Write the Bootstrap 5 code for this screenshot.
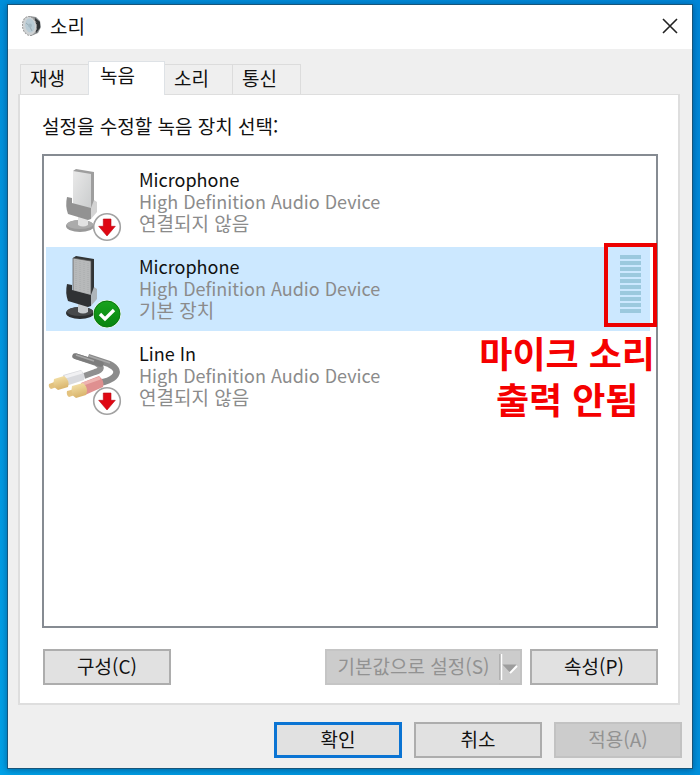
<!DOCTYPE html>
<html lang="ko">
<head>
<meta charset="utf-8">
<meta name="viewport" content="width=device-width, initial-scale=1">
<title>소리</title>
<link href="https://cdn.jsdelivr.net/npm/bootstrap@5.3.0/dist/css/bootstrap.min.css" rel="stylesheet">
<style>
body{font-family:"Noto Sans CJK KR",sans-serif;font-size:19px;line-height:22px;color:#111;background:linear-gradient(to top right,#00a2e8,#0091dc 45%,#0087d8)}
.desk{padding:4px 7px 6px}
.win{background:#efefef;border:1px solid #17557a;box-shadow:0 1px 7px #003d70a0}
.win-title{height:44px;padding:0 14px 3px 14px;background:#fff}
.win-title h1{font-size:19px;line-height:22px;font-weight:400}
.close-btn{line-height:0}
.win-body{padding:12px 12px 0 10px}
.sheet-tabs{--bs-nav-tabs-border-width:0;padding-left:2px}
.sheet-tabs .nav-link{height:30px;width:69px;padding:0 0 4px 9px;margin:0 -1px 0 0;font-size:19px;line-height:22px;text-align:left;color:#111;background:#efefef;border:1px solid #dcdcdc;border-bottom:0;border-radius:0}
.sheet-tabs .nav-link.active{height:34px;width:77px;padding:0 0 8px 11px;margin-bottom:-1px;background:#fff;color:#111;position:relative;z-index:1}
.sheet{background:#fff;border:2px solid #dedede;border-top-width:1px;padding:20px 20px 18px 22px}
.devices{border:2px solid #868b92;padding:4px 6px 0 2px;margin-top:17px;border-radius:0}
.device{height:84px;margin-bottom:3px;padding:0;border:0;background:#fff;gap:11px;color:#111}
.device.picked{background:#cce8ff}
.device-icon{width:82px;height:84px;flex:none}
.device-text{font-size:18px;padding-bottom:3px}
.device small{font-size:18px;color:#8b8b8b;display:block}
.device small:last-child{font-size:19px}
.meter{margin:8px 9px auto auto;width:21px;gap:2px}
.meter i{height:4px;background:#9bc9de}
.red-box{position:absolute;right:-7px;top:-4px;width:53px;height:84px;border:4px solid #ed0000}
.red-note{position:absolute;right:-5px;top:82px;color:#f50000;font-size:36px;line-height:46px;font-weight:700;text-align:center;white-space:nowrap;z-index:2}
.dlg-btn{width:128px;height:36px;padding:0 0 3px;font-size:19px;line-height:22px;border:2px solid #adadad;border-radius:0;background:#e1e1e1;color:#111}
.dlg-btn:disabled{background:#ccc;border-color:#c2c2c2;color:#929292;opacity:1}
.dlg-btn.default-btn{border:3px solid #0b74d3}
.split-main{width:175px;border-right:0}
.split-main:disabled{border-color:#c5c5c5}
.split-drop{width:23px;border-left:0;padding:0}
.sheet-actions{margin-top:21px;padding:0 0 0 1px}
.footer-actions{padding:17px 10px 10px;gap:12px}
</style>
<script src="https://cdn.jsdelivr.net/npm/bootstrap@5.3.0/dist/js/bootstrap.bundle.min.js"></script>
</head>
<body>
<svg width="0" height="0" class="position-absolute" aria-hidden="true">
  <defs>
    <linearGradient id="gold" x1="0" y1="0" x2="0.3" y2="1"><stop stop-color="#f7e6af"/><stop offset="1" stop-color="#d9b46c"/></linearGradient>
    <linearGradient id="green" x1="0" y1="0" x2="0" y2="1"><stop stop-color="#19a31e"/><stop offset="1" stop-color="#078410"/></linearGradient>
    <linearGradient id="plate" x1="0" y1="0" x2="1" y2="1"><stop stop-color="#e9e9e9"/><stop offset="1" stop-color="#c9cbcc"/></linearGradient>
    <g id="down">
      <circle cx="61" cy="67" r="13.3" fill="#fff" stroke="#a2a2a2" stroke-width="1.6"/>
      <path d="M57.300 59h7.700v7.300h4.300L61 76l-8.300-9.700h4.600z" fill="#df0713" stroke="#b90710" stroke-width=".6"/>
    </g>
  </defs>
</svg>
<div class="desk d-flex flex-column min-vh-100">
<main class="win flex-grow-1 d-flex flex-column">
  <header class="win-title d-flex align-items-center">
    <svg width="20" height="22" viewBox="0 0 20 22" aria-hidden="true">
      <path d="M7 1l7 1 4 4 1 6-3 6-7 3z" fill="#8b8f91"/>
      <path d="M13 3l5 4v6l-4 5z" fill="#303437"/>
      <ellipse cx="7.500" cy="11" rx="7" ry="9.500" transform="rotate(-9 7.500 11)" fill="#cfd3d5" stroke="#999" stroke-width="1" stroke-dasharray="2 1"/>
      <ellipse cx="8" cy="10.500" rx="4.800" ry="7" transform="rotate(-9 8 10.500)" fill="#b9ccd6"/>
      <path d="M4 8q4 2 6 8" fill="none" stroke="#9babb2"/>
      <circle cx="8" cy="10.500" r="2" fill="#a4b9c4"/>
    </svg>
    <h1 class="mb-0 ms-2">소리</h1>
    <button type="button" class="close-btn btn p-0 border-0 ms-auto" aria-label="닫기">
      <svg width="16" height="16" viewBox="0 0 16 16"><path d="M1 1l14 14M15 1L1 15" stroke="#222" stroke-width="1.600"/></svg>
    </button>
  </header>
  <div class="win-body flex-grow-1 d-flex flex-column">
    <div class="sheet-tabs nav nav-tabs flex-nowrap align-items-end" role="tablist">
      <button type="button" class="nav-link" role="tab" aria-selected="false">재생</button>
      <button type="button" class="nav-link active" role="tab" aria-selected="true">녹음</button>
      <button type="button" class="nav-link" role="tab" aria-selected="false">소리</button>
      <button type="button" class="nav-link" role="tab" aria-selected="false">통신</button>
    </div>
    <section class="sheet flex-grow-1 d-flex flex-column" role="tabpanel">
      <p class="mb-0">설정을 수정할 녹음 장치 선택:</p>
      <div class="devices list-group flex-grow-1">
        <button type="button" class="device list-group-item d-flex align-items-center text-start">
          <svg class="device-icon" viewBox="0 0 82 84" aria-hidden="true">
            <ellipse cx="34" cy="66" rx="14" ry="6" fill="#999"/><ellipse cx="34" cy="64.500" rx="13" ry="4.500" fill="#ababab"/>
            <path d="M32 54h10v11q-5 3-10 0z" fill="#e2e2e2"/>
            <path d="M27 11l3-2 18 3v36l-3 4z" fill="#9e9e9e"/><path d="M27 11l18 3v38l-18-6z" fill="url(#plate)"/>
            <path d="M21 37l5 1v5l19 5v11l-3 1-20-6q-3-8-1-17z" fill="#929292"/>
            <path d="M45 48l3-8 3 2v10l-6 7z" fill="#d3d3d3"/>
            <use href="#down"/>
          </svg>
          <span class="device-text">Microphone<small>High Definition Audio Device</small><small>연결되지 않음</small></span>
        </button>
        <button type="button" class="device picked list-group-item d-flex align-items-center text-start" aria-current="true">
          <svg class="device-icon" viewBox="0 0 82 84" aria-hidden="true">
            <ellipse cx="34" cy="66" rx="14" ry="6" fill="#2d2f31"/><ellipse cx="34" cy="64.500" rx="13" ry="4.500" fill="#47494b"/>
            <path d="M32 54h10v11q-5 3-10 0z" fill="#c7cbce"/>
            <path d="M27 11l3-2 18 3v36l-3 4z" fill="#313436"/><path d="M27 11l18 3v38l-18-6z" fill="#b7b9ba" stroke="#555" stroke-width=".7"/>
            <path d="M30 13v33M34 14v34M38 15v34M42 16v33" stroke="#a8abac" stroke-dasharray="1 1"/>
            <path d="M21 37l5 1v5l19 5v11l-3 1-20-6q-3-8-1-17z" fill="#303234"/>
            <path d="M45 48l3-8 3 2v10l-6 7z" fill="#aeb5ba"/>
            <circle cx="61" cy="67" r="14" fill="#e9f7e9"/><circle cx="61" cy="67" r="13" fill="url(#green)" stroke="#08780c"/>
            <path d="M54 67l5 5 9-9" fill="none" stroke="#fff" stroke-width="3.300"/>
          </svg>
          <span class="device-text">Microphone<small>High Definition Audio Device</small><small>기본 장치</small></span>
          <span class="meter d-flex flex-column" role="img" aria-label="입력 수준"><i></i><i></i><i></i><i></i><i></i><i></i><i></i><i></i><i></i><i></i></span>
          <span class="red-box"></span>
          <span class="red-note">마이크 소리<br>출력 안됨</span>
        </button>
        <button type="button" class="device list-group-item d-flex align-items-center text-start">
          <svg class="device-icon" viewBox="0 0 82 84" aria-hidden="true">
            <path d="M29 22L50 29Q60 35 49 38L38 42" fill="none" stroke="#909090" stroke-width="6"/>
            <path d="M42 23L63 30Q75 36 68 43Q64 47 53 49" fill="none" stroke="#8b8b8b" stroke-width="6.500"/>
            <path d="M29 22L55 30" stroke="#7d7d7d" stroke-width="5.500" stroke-linecap="round"/>
            <path d="M43 22L64 29M30 21L48 27" stroke="#a8a8a8" stroke-width="1.500"/>
            <path d="M17 41l18-5q5 5 3 10l-18 6z" fill="#d9dade"/><path d="M19 43l17-5" stroke="#f1f1f3" stroke-width="3"/>
            <path d="M3 50l8-3 3 5-9 3q-3-2-2-5z" fill="#e3c27e"/>
            <path d="M8 45l10-3q6 4 4 11l-10 3q-6-3-4-11z" fill="url(#gold)"/>
            <path d="M35 49l18-7q6 5 4 11l-18 8z" fill="#df9090"/><path d="M37 50l17-6" stroke="#eeb4b0" stroke-width="3"/>
            <path d="M21 57l8-2 3 5-9 3q-3-2-2-6z" fill="#e3c27e"/>
            <path d="M26 52l11-3q6 5 3 12l-10 3q-6-3-4-12z" fill="url(#gold)"/>
            <use href="#down"/>
          </svg>
          <span class="device-text">Line In<small>High Definition Audio Device</small><small>연결되지 않음</small></span>
        </button>
      </div>
      <div class="sheet-actions d-flex">
        <button type="button" class="dlg-btn btn">구성(C)</button>
        <div class="btn-group ms-auto me-2">
          <button type="button" class="dlg-btn split-main btn flex-grow-0 text-nowrap" disabled>기본값으로 설정(S)</button>
          <button type="button" class="dlg-btn split-drop btn flex-grow-0" disabled aria-label="기본값 옵션">
            <svg class="d-block" width="21" height="32" viewBox="0 0 21 32"><path d="M1 3v26" stroke="#a8a8a8" stroke-width="1.500"/><path d="M2.500 3v26" stroke="#fff" stroke-width="1.500"/><path d="M11 22l7-7" stroke="#fff" stroke-width="2"/><path d="M3.500 13.500h14l-7 7.500z" fill="#9d9d9d"/></svg>
          </button>
        </div>
        <button type="button" class="dlg-btn btn">속성(P)</button>
      </div>
    </section>
  </div>
  <footer class="footer-actions d-flex justify-content-end">
    <button type="button" class="dlg-btn default-btn btn">확인</button>
    <button type="button" class="dlg-btn btn">취소</button>
    <button type="button" class="dlg-btn btn" disabled>적용(A)</button>
  </footer>
</main>
</div>
</body>
</html>
